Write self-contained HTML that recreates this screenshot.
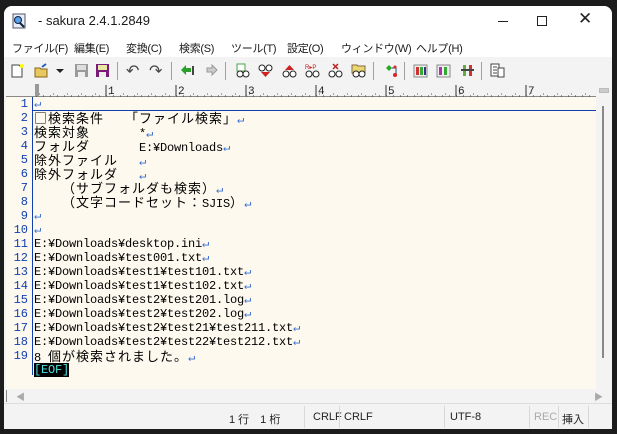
<!DOCTYPE html>
<html><head><meta charset="utf-8"><style>
*{margin:0;padding:0;box-sizing:border-box}
body{width:617px;height:434px;background:#1c1c1c;position:relative;overflow:hidden;font-family:"Liberation Sans","Noto Sans CJK JP",sans-serif}
#win{position:absolute;left:4px;top:6px;width:608px;height:423px;background:#f3f3f3;border-radius:8px 8px 0 0;overflow:hidden}
#title{position:absolute;left:0;top:0;width:100%;height:30px;background:#fff}
#title .t{position:absolute;left:34px;top:7px;font-size:13px;color:#1a1a1a}
#menu{position:absolute;left:0;top:30px;width:100%;height:21px;background:#fff;font-size:11px;letter-spacing:-0.3px;color:#1a1a1a}
#menu span{position:absolute;top:4px}
#tb{position:absolute;left:0;top:51px;width:100%;height:27px;background:#f3f3f3}
.ic{position:absolute;top:6px;width:15px;height:15px}
.sep{position:absolute;top:5px;width:1px;height:18px;background:#a0a0a0}
#ruler{position:absolute;left:2px;top:78px;width:590px;height:13px;background:#f3f3f3;border-bottom:1px solid #888}
#ed{position:absolute;left:2px;top:91px;width:590px;height:292px;background:#fdf9ee}
.ln{position:absolute;left:0;width:22px;text-align:right;color:#1240b0;font-family:"Liberation Mono",monospace;font-size:12px;line-height:14px}
.tx{position:absolute;left:28px;white-space:pre;font-family:"Liberation Mono",monospace;font-size:12px;letter-spacing:-0.2px;line-height:14px;color:#000}
.j{font-family:"Noto Sans CJK JP",sans-serif;font-size:13px;letter-spacing:1px}
.r{color:#3a6fd0}
#vs{position:absolute;left:592px;top:78px;width:16px;height:305px;background:#f3f3f3}
#hs{position:absolute;left:0;top:383px;width:608px;height:14px;background:#f3f3f3}
#sb{position:absolute;left:0;top:397px;width:608px;height:26px;background:#f3f3f3;border-top:1px solid #ddd;font-size:11px;color:#222}
#sb span{position:absolute;top:7px}
#sb i{position:absolute;top:2px;width:1px;height:22px;background:#d8d8d8}
</style></head><body>
<div id="win">
<div id="title">
<svg style="position:absolute;left:8px;top:7px" width="15" height="16"><rect x="1" y="1" width="12" height="14" fill="#e8eef8" stroke="#556"/><circle cx="6" cy="7" r="3.5" fill="#5aa0e8" stroke="#124"/><line x1="8" y1="10" x2="12" y2="14" stroke="#124" stroke-width="2"/></svg>
<span class="t">- sakura 2.4.1.2849</span>
<div style="position:absolute;left:494px;top:15px;width:10px;height:1px;background:#222"></div>
<div style="position:absolute;left:533px;top:10px;width:10px;height:10px;border:1px solid #222"></div>
<span style="position:absolute;left:574px;top:3px;font-size:17px;color:#222">✕</span>
</div>
<div id="menu">
<span style="left:8px">ファイル(F)</span><span style="left:70px">編集(E)</span><span style="left:122px">変換(C)</span><span style="left:175px">検索(S)</span><span style="left:227px">ツール(T)</span><span style="left:283px">設定(O)</span><span style="left:337px">ウィンドウ(W)</span><span style="left:412px">ヘルプ(H)</span>
</div>
<div id="tb">
<svg class="ic" style="left:6px" viewBox="0 0 15 15"><path d="M2 2h7l3 3v9H2z" fill="#fff" stroke="#444"/><circle cx="12" cy="3" r="2" fill="#ff0"/></svg>
<svg class="ic" style="left:30px" viewBox="0 0 15 15"><path d="M1 5h5l1 1h6v8H1z" fill="#e8c860" stroke="#86641c"/><path d="M8 4l4-3" stroke="#2a60c0" stroke-width="2"/></svg>
<div style="position:absolute;left:52px;top:12px;border:4px solid transparent;border-top:4px solid #222"></div>
<svg class="ic" style="left:70px" viewBox="0 0 15 15"><rect x="1" y="1" width="13" height="13" fill="#9a9a9a"/><rect x="3" y="2" width="9" height="5" fill="#ddd"/><rect x="4" y="9" width="7" height="5" fill="#eee"/></svg>
<svg class="ic" style="left:91px" viewBox="0 0 15 15"><rect x="1" y="1" width="13" height="13" fill="#7a1a7a"/><rect x="3" y="2" width="9" height="5" fill="#e8e8a0"/><rect x="4" y="9" width="7" height="5" fill="#eee"/></svg>
<i class="sep" style="left:113px"></i>
<span style="position:absolute;left:122px;top:4px;font-size:16px;color:#444">↶</span>
<span style="position:absolute;left:145px;top:4px;font-size:16px;color:#444">↷</span>
<i class="sep" style="left:167px"></i>
<svg class="ic" style="left:176px" viewBox="0 0 15 15"><path d="M1 7l5-5v3h5v4H6v3z" fill="#2aa02a"/><rect x="12" y="3" width="2" height="9" fill="#444"/></svg>
<svg class="ic" style="left:199px" viewBox="0 0 15 15"><path d="M14 7l-5-5v3H4v4h5v3z" fill="#ccc" stroke="#999"/></svg>
<i class="sep" style="left:221px"></i>
<svg class="ic" style="left:231px" viewBox="0 0 15 15"><rect x="2" y="1" width="8" height="7" fill="#fff" stroke="#4a4"/><circle cx="5" cy="11" r="3" fill="#fff" stroke="#222"/><circle cx="11" cy="11" r="3" fill="#fff" stroke="#222"/></svg>
<svg class="ic" style="left:254px" viewBox="0 0 15 15"><circle cx="4" cy="5" r="3" fill="#fff" stroke="#222"/><circle cx="11" cy="5" r="3" fill="#fff" stroke="#222"/><path d="M3 9h9l-4.5 5z" fill="#d02020"/></svg>
<svg class="ic" style="left:278px" viewBox="0 0 15 15"><path d="M3 7h9L7.5 2z" fill="#d02020"/><circle cx="4" cy="11" r="3" fill="#fff" stroke="#222"/><circle cx="11" cy="11" r="3" fill="#fff" stroke="#222"/></svg>
<svg class="ic" style="left:301px" viewBox="0 0 15 15"><text x="0" y="6" font-size="6" fill="#c02020" font-family="Liberation Sans">R▸P</text><circle cx="4" cy="11" r="3" fill="#fff" stroke="#222"/><circle cx="11" cy="11" r="3" fill="#fff" stroke="#222"/></svg>
<svg class="ic" style="left:324px" viewBox="0 0 15 15"><path d="M5 1l5 5M10 1L5 6" stroke="#c02020" stroke-width="1.5"/><circle cx="4" cy="11" r="3" fill="#fff" stroke="#222"/><circle cx="11" cy="11" r="3" fill="#fff" stroke="#222"/></svg>
<svg class="ic" style="left:347px" viewBox="0 0 15 15"><path d="M1 2h5l1 1h7v7H1z" fill="#e8d870" stroke="#864"/><circle cx="5" cy="11" r="3" fill="#fff" stroke="#222"/><circle cx="11" cy="11" r="3" fill="#fff" stroke="#222"/></svg>
<i class="sep" style="left:369px"></i>
<svg class="ic" style="left:379px" viewBox="0 0 15 15"><path d="M3 5l3-3 3 3-3 3z" fill="#2a2"/><path d="M9 5h4v6" stroke="#248" fill="none"/><circle cx="12" cy="4" r="1.5" fill="#d22"/><circle cx="12" cy="12" r="2" fill="#d22"/></svg>
<i class="sep" style="left:400px"></i>
<svg class="ic" style="left:409px" viewBox="0 0 15 15"><rect x="1" y="2" width="13" height="12" fill="#eee" stroke="#888"/><rect x="3" y="4" width="3" height="8" fill="#c33"/><rect x="7" y="4" width="3" height="8" fill="#3a3"/><rect x="11" y="4" width="2" height="8" fill="#338"/></svg>
<svg class="ic" style="left:432px" viewBox="0 0 15 15"><rect x="1" y="2" width="13" height="12" fill="#eee" stroke="#888"/><rect x="3" y="4" width="3" height="8" fill="#a3a"/><rect x="8" y="4" width="3" height="8" fill="#3a3"/></svg>
<svg class="ic" style="left:456px" viewBox="0 0 15 15"><rect x="3" y="2" width="3" height="11" fill="#6a4"/><rect x="9" y="2" width="3" height="11" fill="#c33"/><rect x="1" y="6" width="13" height="2" fill="#444"/></svg>
<i class="sep" style="left:477px"></i>
<svg class="ic" style="left:486px" viewBox="0 0 15 15"><rect x="1" y="1" width="8" height="12" fill="#fff" stroke="#444"/><rect x="8" y="5" width="6" height="9" fill="#fff" stroke="#444"/><path d="M3 4h4M3 7h4M3 10h4" stroke="#444"/></svg>
</div>
<div id="ruler">
<svg width="590" height="13" style="position:absolute;left:0;top:0">
<g stroke="#333">
<line x1="30" y1="1" x2="30" y2="12"/><line x1="100" y1="1" x2="100" y2="12"/><line x1="170" y1="1" x2="170" y2="12"/><line x1="240" y1="1" x2="240" y2="12"/><line x1="310" y1="1" x2="310" y2="12"/><line x1="380" y1="1" x2="380" y2="12"/><line x1="450" y1="1" x2="450" y2="12"/><line x1="520" y1="1" x2="520" y2="12"/>
</g>
<line x1="30" y1="12" x2="590" y2="12" stroke="#333" stroke-dasharray="1 6"/>
<line x1="33" y1="10" x2="590" y2="10" stroke="#555" stroke-dasharray="1 13"/>
<rect x="29" y="0" width="4" height="12" fill="#999"/>
<g font-family="Liberation Mono" font-size="11" fill="#222"><text x="102" y="10">1</text><text x="172" y="10">2</text><text x="242" y="10">3</text><text x="312" y="10">4</text><text x="382" y="10">5</text><text x="452" y="10">6</text><text x="522" y="10">7</text></g>
</svg>
</div>
<div id="ed">
<div style="position:absolute;left:26px;top:0;width:1px;height:278px;background:#1240b0"></div>
<div style="position:absolute;left:26px;top:13px;width:564px;height:1px;background:#1240b0"></div>
<div class="ln" style="top:0px">1</div><div class="tx r" style="top:0px">↵</div>
<div class="ln" style="top:14px">2</div><div class="tx" style="top:14px"><span class="j">□検索条件　</span> <span class="j">「ファイル検索」</span><span class="r">↵</span></div>
<div class="ln" style="top:28px">3</div><div class="tx" style="top:28px"><span class="j">検索対象</span>       *<span class="r">↵</span></div>
<div class="ln" style="top:42px">4</div><div class="tx" style="top:42px"><span class="j">フォルダ</span>       E:¥Downloads<span class="r">↵</span></div>
<div class="ln" style="top:56px">5</div><div class="tx" style="top:56px"><span class="j">除外ファイル</span>   <span class="r">↵</span></div>
<div class="ln" style="top:70px">6</div><div class="tx" style="top:70px"><span class="j">除外フォルダ</span>   <span class="r">↵</span></div>
<div class="ln" style="top:84px">7</div><div class="tx" style="top:84px">    <span class="j">（サブフォルダも検索）</span><span class="r">↵</span></div>
<div class="ln" style="top:98px">8</div><div class="tx" style="top:98px">    <span class="j">（文字コードセット：</span>SJIS<span class="j">）</span><span class="r">↵</span></div>
<div class="ln" style="top:112px">9</div><div class="tx r" style="top:112px">↵</div>
<div class="ln" style="top:126px">10</div><div class="tx r" style="top:126px">↵</div>
<div class="ln" style="top:140px">11</div><div class="tx" style="top:140px">E:¥Downloads¥desktop.ini<span class="r">↵</span></div>
<div class="ln" style="top:154px">12</div><div class="tx" style="top:154px">E:¥Downloads¥test001.txt<span class="r">↵</span></div>
<div class="ln" style="top:168px">13</div><div class="tx" style="top:168px">E:¥Downloads¥test1¥test101.txt<span class="r">↵</span></div>
<div class="ln" style="top:182px">14</div><div class="tx" style="top:182px">E:¥Downloads¥test1¥test102.txt<span class="r">↵</span></div>
<div class="ln" style="top:196px">15</div><div class="tx" style="top:196px">E:¥Downloads¥test2¥test201.log<span class="r">↵</span></div>
<div class="ln" style="top:210px">16</div><div class="tx" style="top:210px">E:¥Downloads¥test2¥test202.log<span class="r">↵</span></div>
<div class="ln" style="top:224px">17</div><div class="tx" style="top:224px">E:¥Downloads¥test2¥test21¥test211.txt<span class="r">↵</span></div>
<div class="ln" style="top:238px">18</div><div class="tx" style="top:238px">E:¥Downloads¥test2¥test22¥test212.txt<span class="r">↵</span></div>
<div class="ln" style="top:252px">19</div><div class="tx" style="top:252px">8 <span class="j">個が検索されました。</span><span class="r">↵</span></div>
<div class="tx" style="top:266px;background:#000;color:#4ee0e0">[EOF]</div>
</div>
<div id="vs"><div style="position:absolute;left:3px;top:4px;width:10px;height:5px;background:#ccc;border:1px solid #bbb"></div><div style="position:absolute;left:6px;top:22px;width:2px;height:252px;background:#888"></div></div>
<div id="hs"><div style="position:absolute;left:2px;top:1px;width:1px;height:12px;background:#888"></div><span style="position:absolute;left:12px;top:1px;font-size:9px;color:#aaa">◀</span><span style="position:absolute;left:590px;top:1px;font-size:9px;color:#aaa">▶</span></div>
<div id="sb">
<span style="left:225px">1 行　1 桁</span>
<i style="left:300px"></i>
<span style="left:309px">CRLF</span><i style="left:335px"></i><span style="left:340px">CRLF</span>
<i style="left:440px"></i><span style="left:446px">UTF-8</span>
<i style="left:525px"></i><span style="left:530px;color:#aaa">REC</span><i style="left:554px"></i><span style="left:558px">挿入</span><i style="left:584px"></i>
</div>
</div>
</body></html>
